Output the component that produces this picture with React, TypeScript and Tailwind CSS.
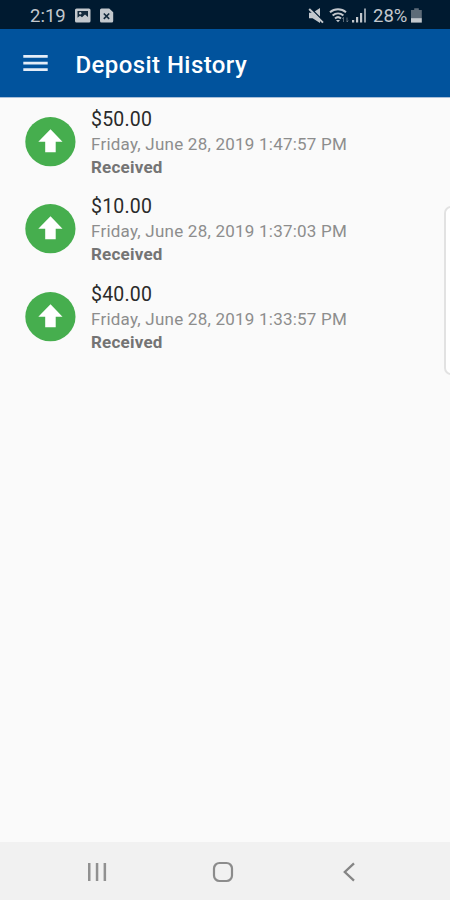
import React from 'react';

const deposits = [
  { amount: '$50.00', date: 'Friday, June 28, 2019 1:47:57 PM', status: 'Received' },
  { amount: '$10.00', date: 'Friday, June 28, 2019 1:37:03 PM', status: 'Received' },
  { amount: '$40.00', date: 'Friday, June 28, 2019 1:33:57 PM', status: 'Received' },
];

const StatusBar: React.FC = () => (
  <div className="flex h-[29px] shrink-0 items-center bg-[#001a30] pl-[30px] pt-[2px] text-[#c3c8cd]">
    <span className="w-[36px] whitespace-nowrap pt-[2px] text-[18.5px] leading-none">2:19</span>
    <svg className="ml-[9px]" width="16" height="16" viewBox="0 0 16 16">
      <rect x="0" y="0.5" width="15.5" height="14" rx="1.6" fill="currentColor" />
      <path d="M2.5 2.9h10.5v6.2l-3-2.7-3 2.9-2-1.5-2.5 2z" fill="#152b3d" />
      <circle cx="5.2" cy="5.3" r="1.2" fill="currentColor" />
    </svg>
    <svg className="ml-[9px]" width="14" height="16" viewBox="0 0 14 16">
      <path d="M1.5 0.5h7.7L13.2 4.3v8.8a1.5 1.5 0 0 1-1.5 1.5H1.5A1.5 1.5 0 0 1 0 13.1V2A1.5 1.5 0 0 1 1.5.5z" fill="currentColor" />
      <path d="M3.8 5.5l5.4 5.4M9.2 5.5l-5.4 5.4" stroke="#152b3d" strokeWidth="1.6" />
    </svg>
    <svg className="ml-[194px]" width="17" height="16" viewBox="0 0 17 16">
      <path d="M1 4.8h3.6L12 0v15L4.6 10.2H1z" fill="currentColor" />
      <path d="M2.3 0l14 14" stroke="#001a30" strokeWidth="1.6" />
      <path d="M1.2 1l13.8 13.6" stroke="currentColor" strokeWidth="2" />
    </svg>
    <svg className="ml-[4px]" width="21" height="16" viewBox="0 0 21 16" fill="none" stroke="currentColor">
      <path d="M1 4.2c4.5-3.8 11.5-3.8 16 0M3.6 7.5c3.2-2.8 7.6-2.8 10.8 0M6 10.4c1.9-1.6 4.1-1.6 6 0" strokeWidth="2" />
      <path d="M7 11.9h4L9 14.2z" fill="currentColor" stroke="none" />
      <path d="M14.5 14v-4.5M13.3 11l1.2-1.6M18 9.5V14M19.2 12.5L18 14" strokeWidth="0.9" opacity="0.5" />
    </svg>
    <svg className="ml-[2px]" width="15" height="16" viewBox="0 0 15 16" fill="currentColor">
      <path d="M0 12h2.2v2.5H0zM4 9h2.2v5.5H4zM8 5h2.2v9.5H8z" />
      <path d="M12 0.5h2v14h-2z" opacity="0.75" />
    </svg>
    <span className="ml-[6px] w-[35px] whitespace-nowrap pt-[2px] text-[18.5px] leading-none">28%</span>
    <svg className="ml-[3px]" width="11" height="16" viewBox="0 0 11 16">
      <path d="M3.2 0.3h4.6v1.8h3v8H0v-8h3.2z" fill="#5d6b78" />
      <path d="M0 10.1h10.8v4.5H0z" fill="currentColor" />
    </svg>
  </div>
);

const App: React.FC = () => {
  return (
    <div className="relative flex h-[900px] w-[450px] flex-col overflow-hidden bg-[#fafafa] font-[Roboto,sans-serif]">
      <StatusBar />

      <header className="flex h-[69px] shrink-0 items-center border-b border-[#a9bfd9] bg-[#01539d] pl-[23px] text-white">
        <svg width="25" height="18" viewBox="0 0 25 18" fill="#e4edf8">
          <path d="M0.3 1h24.4v2.8H0.3zM0.3 7.7h24.4v2.8H0.3zM0.3 14.3h24.4v2.8H0.3z" />
        </svg>
        <h1 className="ml-[27.5px] pt-[3px] text-[24px] font-medium leading-none tracking-[0.42px]">Deposit History</h1>
      </header>

      <main className="flex-1">
        {deposits.map((deposit) => (
          <div key={deposit.date} className="flex h-[87.5px] items-center pl-[25px]">
            <svg width="51" height="50" viewBox="0 0 51 50">
              <ellipse cx="25.4" cy="24.7" rx="25.1" ry="24.6" fill="#46ae4e" />
              <path d="M25.5 12.3L37.5 24.8h-6.8v10.4H20.2V24.8h-6.9z" fill="#fff" />
            </svg>
            <div className="ml-[15px] whitespace-nowrap pt-[2.4px]">
              <p className="text-[19.5px] leading-[25px] tracking-[0.2px] text-[#2a2a2a]">{deposit.amount}</p>
              <p className="text-[17px] leading-[24px] tracking-[0.23px] text-[#8d8d8d]">{deposit.date}</p>
              <p className="text-[17px] font-bold leading-[23px] tracking-[0.22px] text-[#747474]">{deposit.status}</p>
            </div>
          </div>
        ))}
      </main>

      {/* edge panel handle */}
      <div className="absolute -right-[10px] top-[206px] h-[169px] w-4 rounded-[7px] border-2 border-[#e2e2e2] bg-white" />

      <nav className="flex h-[58px] shrink-0 items-center bg-[#f1f1f1] pt-[2px]">
        <svg className="ml-[87px]" width="20" height="20" viewBox="0 0 20 20" fill="#919191">
          <path d="M1 1h2.5v18H1zM8.8 1h2.5v18H8.8zM16.6 1h2.5v18h-2.5z" />
        </svg>
        <svg className="ml-[105px]" width="22" height="22" viewBox="0 0 22 22" fill="none">
          <rect x="2" y="2" width="18" height="18" rx="5.5" stroke="#8c8c8c" strokeWidth="2.2" />
        </svg>
        <svg className="ml-[108px]" width="14" height="20" viewBox="0 0 14 20" fill="none">
          <path d="M12 1.4L2.8 10l9.2 8.6" stroke="#858585" strokeWidth="2.3" />
        </svg>
      </nav>
    </div>
  );
};

export default App;
